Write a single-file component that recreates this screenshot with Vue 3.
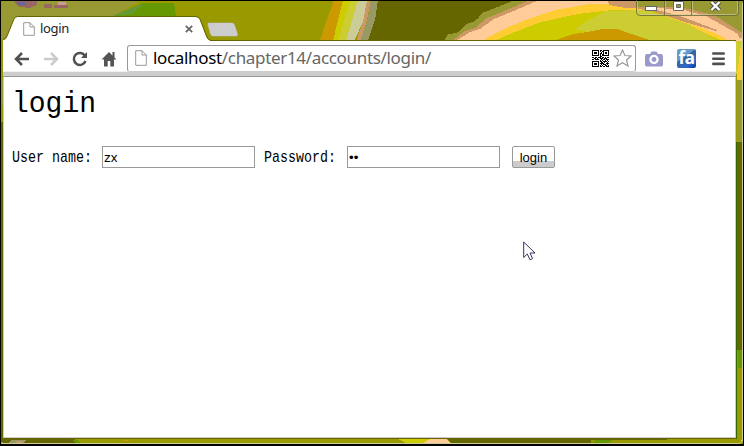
<script setup>
import { ref } from 'vue'

const username = ref('zx')
const password = ref('••')

const qrRows = [
  '11111110110111111',
  '10000010101100001',
  '10111010010101101',
  '10111010110101101',
  '10000010101100001',
  '11111110101111111',
  '00000000110000000',
  '11011011101101011',
  '00110100111011100',
  '11011110010110111',
  '00000000101001010',
  '11111110110111101',
  '10000010011010010',
  '10111010111100111',
  '10111010010111010',
  '10000010101001101',
  '11111110110110111',
]
const qrPath = qrRows
  .flatMap((row, y) => [...row].map((c, x) => (c === '1' ? `M${x} ${y}h1v1h-1z` : '')))
  .join('')
</script>

<template>
  <div class="window">
    <svg class="glass" width="744" height="446" viewBox="0 0 744 446" shape-rendering="crispEdges" aria-hidden="true">
      <rect width="744" height="446" fill="#999900" />
      <path d="M0 0H142L113 16V41H0z" fill="#999933" />
      <path d="M142 3H174L176 16L196 18H110z" fill="#669900" />
      <path d="M136 6L145 3L132 14L112 16z" fill="#669933" />
      <path d="M13 1H37V5L30 8L20 7z" fill="#996666" />
      <path d="M17 2h9v3h-9z" fill="#666699" />
      <path d="M44 4h8v4h-8zM54 5h14v3H54z" fill="#996666" />
      <path d="M58 2h8v3h-8z" fill="#cc9999" />
      <path d="M334 0H344L334 41H320L325 25z" fill="#cc9900" />
      <path d="M343 0H354L344 41H333L338 20z" fill="#cccc00" />
      <path d="M350 0H361L350 41H338z" fill="#cccc33" />
      <path d="M358 0H369L364 20L354 41H346z" fill="#cccc99" />
      <path d="M367 0H371L366 24L360 41H356L363 22z" fill="#cc9966" />
      <path d="M371 0H379L375 20L368 41H360L367 22z" fill="#999966" />
      <path d="M378 0H520L490 10L470 24L444 41H368L375 20z" fill="#666600" />
      <path d="M444 41L448 34L458 33L466 24L476 21L482 13L490 10L515 0H744V41z" fill="#999933" />
      <path d="M452 41L465 31L475 28L487 18L502 12L530 0H700L744 28V41z" fill="#cc9966" />
      <path d="M456 41L470 32L480 29L494 19L516 10L539 0H608L744 39V41z" fill="#ffcc99" />
      <path d="M482 41L500 31L525 20L555 10L590 4H620L660 14L700 27L732 41z" fill="#ffcc33" />
      <path d="M494 41L512 33L541 22L578 14L612 10H650L690 26L722 41z" fill="#cccc00" />
      <path d="M575 29L590 19L606 11L645 10L688 24L718 41H624z" fill="#cccc33" />
      <path d="M552 41L573 34L588 32L602 29H618L628 33L640 37L652 41z" fill="#cc9900" />
      <path d="M608 0h50v8h-32l-17-3z" fill="#cc9966" />
      <path d="M636 0H744V34L714 15L680 7H636z" fill="#999933" />
      <path d="M650 8L680 9L706 16L738 34L742 50H735L717 30L680 16z" fill="#ffcc99" />
      <rect x="736" y="41" width="7" height="33" fill="#cccc33" />
      <path d="M741 44h2v36h-6v-6z" fill="#ffcc33" />
      <rect x="737" y="80" width="5" height="62" fill="#999933" />
      <rect x="737" y="142" width="5" height="208" fill="#666600" />
      <path d="M738 350h4v18h-4z" fill="#669900" />
      <rect x="736" y="142" width="1" height="297" fill="#336600" />
      <rect x="1" y="122" width="2" height="320" fill="#666600" />
      <rect x="1" y="80" width="2" height="26" fill="#999933" />
      <path d="M3 439h71l5 4H3z" fill="#666600" />
      <path d="M12 440h14l-3 3H8z" fill="#999966" />
      <path d="M17 441h6l-2 2h-5z" fill="#cc9966" />
      <path d="M72 440h6l2 3h-4z" fill="#669900" />
      <path d="M123 440h6v1h-6z" fill="#cc9900" />
      <path d="M398 439h42l8 4h-42z" fill="#cccc00" />
      <path d="M430 439h16l5 4h-28z" fill="#ffcc99" />
      <path d="M447 439h220v1h-76v3H451z" fill="#666600" />
      <path d="M595 440h18l-5 3h-16z" fill="#669900" />
      <path d="M3 438.500H736M204 40.500H736" stroke="#666600" />
      <path d="M742.500 3V440l-3 3.500H1" fill="none" stroke="#cccc99" />
      <path d="M743.500 0V446M0 .5H744M.5 0V446" fill="none" stroke="#000" />
      <rect y="444" width="744" height="2" fill="#000" />
    </svg>

    <header class="tabstrip">
      <div class="tab">
        <svg class="tab-shape" width="210" height="26" viewBox="0 0 210 26" aria-hidden="true">
          <path d="M0 26V25Q3 25 4 22L11 4Q12 1.500 15 1.500H192Q195 1.500 196.500 4L203 21Q204.500 25 207 25V26z" fill="#fff" />
          <path d="M0 24.500Q3 24 4 21L11 4Q12 1.500 15 1.500H192Q195.500 1.500 197 4L203.500 21Q205 25.500 208 25.500" fill="none" stroke="#666600" />
        </svg>
        <svg class="tab-page" width="12" height="14" viewBox="0 0 12 14">
          <path d="M.7 .7H7L11.300 5V13.300H.7zM7 .7V5H11.300" fill="#fff" stroke="#999" />
        </svg>
        <span class="tab-title">login</span>
        <svg class="tab-close" width="8" height="8" viewBox="0 0 8 8">
          <path d="M.8 .8L7.200 7.200M7.200 .8L.8 7.200" stroke="#666" stroke-width="1.800" />
        </svg>
      </div>
      <svg class="new-tab" width="32" height="16" viewBox="0 0 32 16">
        <path d="M2 .5H25Q27 .5 28 3L31 12Q31.500 14.500 29 14.500H6Q4 14.500 3 12L.5 3Q0 .5 2 .5z" fill="#ccc" stroke="#999933" stroke-width=".7" />
      </svg>
      <svg class="controls" width="105" height="17" viewBox="0 0 105 17">
        <path d="M1.500 1V12Q1.500 14.500 4 14.500H99Q101.500 14.500 101.500 12V1M29.500 1V15M56.500 1V15" fill="none" stroke="#cccc99" stroke-width=".7" />
        <path d="M.5 0V12Q.5 15.500 4 15.500H99Q102.500 15.500 102.500 12V1M28.500 1V15M55.500 1V15" fill="none" stroke="#666633" stroke-width=".8" />
        <rect x="9.500" y="6.500" width="11" height="4" fill="#fff" stroke="#666" />
        <path d="M37.500 1.500h10v9h-10zM40.500 4.500v3h4v-3z" fill="#fff" fill-rule="evenodd" stroke="#666" />
        <path d="M75.500 2L83.500 10M83.500 2L75.500 10" stroke="#555" stroke-width="4.500" />
        <path d="M75.500 2L83.500 10M83.500 2L75.500 10" stroke="#fff" stroke-width="2.300" />
      </svg>
    </header>

    <nav class="toolbar">
      <div class="nav-icons">
        <svg width="16" height="14" viewBox="0 0 16 14"><path d="M8 1L2 7L8 13M2 7H15" fill="none" stroke="#505050" stroke-width="2.500" /></svg>
        <svg width="16" height="14" viewBox="0 0 16 14"><path d="M8 1L14 7L8 13M14 7H1" fill="none" stroke="#ccc" stroke-width="2.500" /></svg>
        <svg width="16" height="16" viewBox="0 0 16 16"><path d="M13 4.800A6 6 0 1 0 13.500 10" fill="none" stroke="#505050" stroke-width="2.500" /><path d="M15 1V7H9z" fill="#505050" /></svg>
        <svg width="16" height="16" viewBox="0 0 16 16"><path d="M8 1L.5 8.500H3V15.500H6.700V10H9.300V15.500H13V8.500H15.500L13.500 6.500V1H11.500V4.500z" fill="#555" /></svg>
      </div>
      <div class="address">
        <svg class="page-icon" width="12" height="16" viewBox="0 0 12 16">
          <path d="M.7 .7H7L11.300 5V15.300H.7zM7 .7V5H11.300" fill="#fff" stroke="#999" />
        </svg>
        <span class="url"><span class="host">localhost</span>/chapter14/accounts/login/</span>
        <svg class="qr" width="17" height="17" viewBox="0 0 17 17" shape-rendering="crispEdges"><path :d="qrPath" /></svg>
        <svg class="star" width="19" height="18" viewBox="0 0 19 18">
          <path d="M9.500 1L11.900 6.500L18 7L13.500 11L15 17L9.500 13.800L4 17L5.500 11L1 7L7.100 6.500z" fill="#fff" stroke="#999" stroke-width="1.200" />
        </svg>
      </div>
      <svg class="camera" width="18" height="16" viewBox="0 0 18 16">
        <path d="M1 3H5L6.500 .5H11.500L13 3H17L18 5V14L17 15.500H1L0 14V5z" fill="#9999cc" />
        <circle cx="9" cy="8.500" r="3.600" fill="#9999cc" stroke="#fff" stroke-width="2.300" />
      </svg>
      <span class="fa">fa</span>
      <svg class="menu" width="13" height="14" viewBox="0 0 13 14"><path d="M1.300 1.500H11.700M1.300 6.700H11.700M1.300 11.900H11.700" stroke="#505050" stroke-width="2.600" stroke-linecap="round" /></svg>
    </nav>

    <main class="page">
      <h1>login</h1>
      <form class="form" @submit.prevent>
        <label for="user">User name:</label>
        <input id="user" v-model="username" class="field user" type="text" autocomplete="off" />
        <label for="pass">Password:</label>
        <input id="pass" v-model="password" class="field pass" type="text" autocomplete="off" />
        <button type="submit">login</button>
      </form>
    </main>

    <svg class="cursor" width="13" height="20" viewBox="0 0 13 20">
      <path d="M.7 1V16.500L4.300 13L7 18.800L9.500 17.600L7 12H12z" fill="#fff" stroke="#333366" />
    </svg>
  </div>
</template>

<style scoped>
.window {
  position: relative;
  box-sizing: border-box;
  display: flex;
  flex-direction: column;
  width: 744px;
  height: 446px;
  padding: 0 8px 8px 3px;
  overflow: hidden;
}
.window svg {
  display: block;
  flex: none;
}
.window .glass {
  position: absolute;
  inset: 0;
}
.tabstrip {
  position: relative;
  display: flex;
  align-items: flex-start;
  height: 41px;
  flex: none;
}
.tab {
  position: relative;
  display: flex;
  align-items: center;
  box-sizing: border-box;
  width: 204px;
  height: 26px;
  margin-top: 15px;
  padding-left: 20px;
}
.tab-shape {
  position: absolute;
  left: 0;
  top: 0;
}
.tab-page {
  position: relative;
  margin-top: 2px;
}
.tab-title {
  position: relative;
  flex: 1;
  margin-left: 5px;
  font: 13px/18px "Noto Sans", sans-serif;
  letter-spacing: -0.35px;
  color: #222;
}
.tab-close {
  position: relative;
  margin: 2px 14px 0 0;
}
.new-tab {
  margin-top: 22px;
}
.controls {
  margin: 0 -5px 0 auto;
}
.toolbar {
  position: relative;
  display: flex;
  align-items: center;
  box-sizing: border-box;
  height: 36px;
  flex: none;
  padding: 0 11px 0 11px;
  background: #fff;
  border-bottom: 1px solid #999;
  box-shadow: inset 0 -4px #ccc, inset 0 -5px #f4eef4;
  border-top-right-radius: 3px;
}
.nav-icons {
  display: flex;
  align-items: center;
  gap: 13px;
}
.address {
  display: flex;
  align-items: center;
  box-sizing: border-box;
  width: 509px;
  height: 27px;
  margin: -1px 0 0 10px;
  padding: 0 3px 0 7px;
  border: 1px solid #999;
  border-bottom-color: #ccc;
  border-radius: 3px;
  background: #fff;
}
.url {
  flex: 1;
  margin-left: 6px;
  font: 17px/24px "Noto Sans", sans-serif;
  letter-spacing: -0.33px;
  white-space: nowrap;
  color: #666;
}
.host {
  color: #000;
}
.star {
  margin-left: 4px;
}
.camera {
  margin-left: 9px;
}
.fa {
  width: 19px;
  height: 19px;
  margin-left: 14px;
  border-radius: 2px;
  background: linear-gradient(145deg, #6699cc 0%, #6699cc 40%, #336699 41%, #3366cc 75%, #003399 100%);
  color: #fff;
  font: bold 17px/18px "Noto Sans", sans-serif;
  letter-spacing: -0.5px;
  text-align: center;
}
.menu {
  margin-left: auto;
}
.page {
  position: relative;
  flex: 1;
  box-sizing: border-box;
  padding: 8px 8px 0;
  background: #fff;
  border: solid #ccc;
  border-width: 0 1px 1px;
  font-family: "Liberation Mono", monospace;
  color: #000;
}
h1 {
  margin: 0;
  font-size: 28px;
  line-height: 40px;
  font-weight: normal;
  transform: scaleY(1.06);
}
.form {
  display: flex;
  align-items: center;
  margin-top: 21px;
  font-size: 13.33px;
}
.form label {
  transform: scaleY(1.18);
}
.field {
  box-sizing: border-box;
  width: 153px;
  height: 22px;
  margin: 0;
  padding: 1px;
  border: 1px solid #999;
  outline: none;
  background: #fff;
  font: 13.33px "Liberation Sans", sans-serif;
  color: #000;
}
.user {
  margin: 0 9px 0 10px;
}
.pass {
  margin: 0 12px 0 11px;
}
button {
  box-sizing: border-box;
  width: 43px;
  height: 22px;
  padding: 0;
  border: 1px solid #999;
  border-radius: 2px;
  background: linear-gradient(#fff 0 14px, #ccc 14px);
  font: 13px "Liberation Sans", sans-serif;
  color: #000;
}
.cursor {
  position: absolute;
  left: 523px;
  top: 241px;
}
</style>
